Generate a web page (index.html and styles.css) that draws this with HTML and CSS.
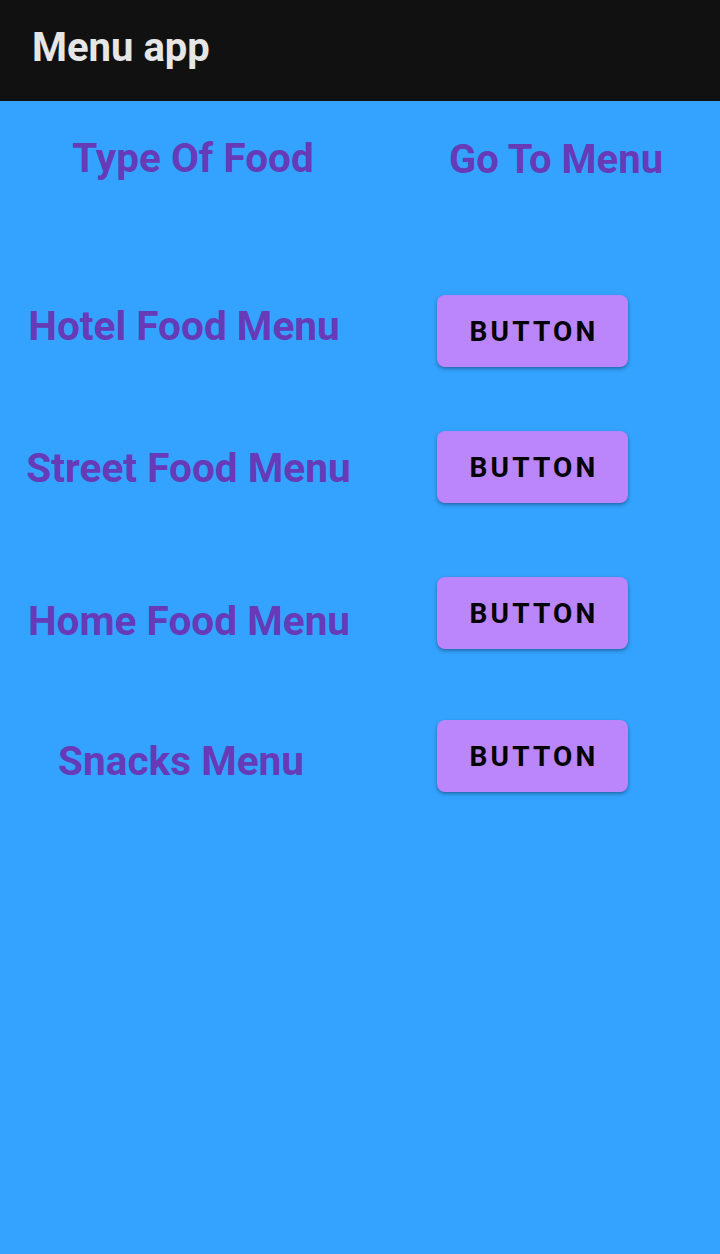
FILE: index.html
```html
<!DOCTYPE html>
<html lang="en">
<head>
<meta charset="utf-8">
<title>Menu app</title>
<link rel="stylesheet" href="styles.css">
</head>
<body>
<header class="appbar">
  <h1 class="appbar-title">Menu app</h1>
</header>
<main class="content">
  <div class="heads">
    <div class="head head-left">Type Of Food</div>
    <div class="head head-right">Go To Menu</div>
  </div>
  <div class="rows">
    <div class="row row-hotel">
      <div class="label">Hotel Food Menu</div>
      <button class="btn">BUTTON</button>
    </div>
    <div class="row row-street">
      <div class="label">Street Food Menu</div>
      <button class="btn">BUTTON</button>
    </div>
    <div class="row row-home">
      <div class="label">Home Food Menu</div>
      <button class="btn">BUTTON</button>
    </div>
    <div class="row row-snacks">
      <div class="label">Snacks Menu</div>
      <button class="btn">BUTTON</button>
    </div>
  </div>
</main>
</body>
</html>
```

FILE: styles.css
```css
* { box-sizing: border-box; }
html, body {
  margin: 0;
  padding: 0;
}
body {
  width: 720px;
  height: 1254px;
  background: #33a3ff;
  font-family: Roboto, "Liberation Sans", Arial, sans-serif;
  overflow: hidden;
}
.appbar {
  height: 101px;
  background: #111111;
  padding-left: 32px;
  padding-top: 28px;
}
.appbar-title {
  margin: 0;
  font-size: 40px;
  line-height: 40px;
  font-weight: 700;
  color: #e6e6e6;
}
.content {
  display: flex;
  flex-direction: column;
}
.heads {
  display: flex;
  padding-top: 37px;
}
.head {
  flex: none;
  font-size: 40px;
  line-height: 40px;
  font-weight: 700;
  color: #673ab7;
  text-align: center;
  white-space: nowrap;
}
.head-left {
  width: 386px;
  font-size: 40.5px;
}
.head-right {
  width: 340px;
  padding-top: 2px;
}
.rows {
  display: flex;
  flex-direction: column;
}
.row {
  display: flex;
  align-items: flex-start;
}
.label {
  width: 437px;
  padding-right: 61px;
  font-size: 40.6px;
  line-height: 40px;
  font-weight: 700;
  color: #673ab7;
  text-align: center;
  white-space: nowrap;
}
.btn {
  flex: none;
  width: 191px;
  height: 72px;
  border: none;
  border-radius: 8px;
  background: #bb86fc;
  color: #000;
  font-family: Roboto, "Liberation Sans", Arial, sans-serif;
  font-size: 28px;
  font-weight: 700;
  letter-spacing: 3.2px;
  padding: 0 0 0 3px;
  box-shadow: 0 2px 4px rgba(0, 0, 0, 0.28), 0 1px 2px rgba(0, 0, 0, 0.12);
}
.row-hotel {
  margin-top: 115px;
}
.row-hotel .label {
  padding-top: 11px;
  padding-right: 69px;
}
.row-street {
  margin-top: 64px;
}
.row-street .label {
  padding-top: 17px;
  padding-right: 60px;
}
.row-home {
  margin-top: 74px;
}
.row-home .label {
  padding-top: 24px;
  padding-right: 59px;
}
.row-snacks {
  margin-top: 71px;
}
.row-snacks .label {
  padding-top: 21px;
  padding-right: 75px;
}
```
